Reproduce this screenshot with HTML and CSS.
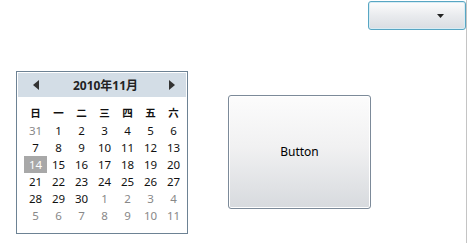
FILE: index.html
```html
<!DOCTYPE html>
<html lang="ja">
<head>
<meta charset="UTF-8">
<title>Controls</title>
<link rel="stylesheet" href="styles.css">
</head>
<body>
<div class="page">
  <div class="top">
    <div class="combo">
      <svg class="combo-arrow" width="7" height="4" viewBox="0 0 7 4"><path d="M0 0H7L3.5 4Z" fill="#222"/></svg>
    </div>
  </div>

  <div class="main">
    <div class="calendar">
      <div class="cal-head">
        <svg width="6" height="10" viewBox="0 0 6 10"><path d="M6 0V10L0 5Z" fill="#333"/></svg>
        <span class="cal-title">2010年11月</span>
        <svg width="6" height="10" viewBox="0 0 6 10"><path d="M0 0V10L6 5Z" fill="#333"/></svg>
      </div>
      <div class="cal-grid" id="grid"></div>
    </div>

    <div class="button">Button</div>
  </div>
</div>

<script>
const grid = document.getElementById('grid');
const names = ['日', '一', '二', '三', '四', '五', '六'];
names.forEach(n => {
  const c = document.createElement('div');
  c.className = 'cell dow';
  c.textContent = n;
  grid.appendChild(c);
});

// Nov 2010 starts on Monday, show Oct 31 first
const days = [31];
for (let d = 1; d <= 30; d++) days.push(d);
for (let d = 1; d <= 11; d++) days.push(d);

days.forEach((d, i) => {
  const c = document.createElement('div');
  c.className = 'cell';
  if (i === 0 || i > 30) c.classList.add('other');
  if (i === 14) c.classList.add('today');
  c.textContent = d;
  grid.appendChild(c);
});
</script>
</body>
</html>
```

FILE: styles.css
```css
body {
  margin: 0;
  background: #fff;
  font-family: "Noto Sans", "Noto Sans CJK JP", sans-serif;
}
.page {
  width: 466px;
  height: 243px;
  border-right: 1px solid #c4c4c4;
}
.top {
  display: flex;
  justify-content: flex-end;
  padding-top: 1px;
}
.combo {
  width: 75px;
  height: 27px;
  padding-right: 21px;
  border: 1px solid #58a6c3;
  border-radius: 3px;
  box-shadow: inset 0 0 0 1px #d8ecf4;
  background: linear-gradient(#fdfdfd, #e9ebee 50%, #dadde2);
  display: flex;
  align-items: center;
  justify-content: flex-end;
  position: relative;
  z-index: 1;
}
.main {
  display: flex;
  align-items: flex-start;
  padding-left: 16px;
  margin-top: 41px;
}
.calendar {
  width: 168px;
  height: 159px;
  border: 1px solid #6d8294;
  padding: 1px;
}
.cal-head {
  height: 24px;
  background: #d3dde6;
  display: flex;
  align-items: center;
  justify-content: space-between;
  padding: 0 11px 0 15px;
}
.cal-title {
  font-size: 12px;
  font-weight: bold;
  color: #222;
  margin-left: 3px;
}
.cal-grid {
  display: grid;
  grid-template-columns: repeat(7, 23px);
  grid-auto-rows: 17px;
  margin: 8px 0 0 6px;
}
.cell {
  display: flex;
  align-items: center;
  justify-content: center;
  font-size: 11.5px;
  color: #111;
}
.cell.dow {
  font-weight: bold;
  font-size: 10.5px;
  margin-bottom: 2px;
}
.cell.other {
  color: #888;
}
.cell.today {
  background: #a8a8a8;
  color: #fff;
}
.button {
  margin-left: 40px;
  margin-top: 24px;
  width: 141px;
  height: 112px;
  padding-bottom: 2px;
  box-sizing: content-box;
  height: 110px;
  border: 1px solid #7c8a99;
  border-radius: 3px;
  box-shadow: inset 0 0 0 1px #fff;
  background: linear-gradient(#fcfcfc, #f1f1f2 45%, #d7dade);
  display: flex;
  align-items: center;
  justify-content: center;
  font-size: 12px;
  color: #000;
}
```
